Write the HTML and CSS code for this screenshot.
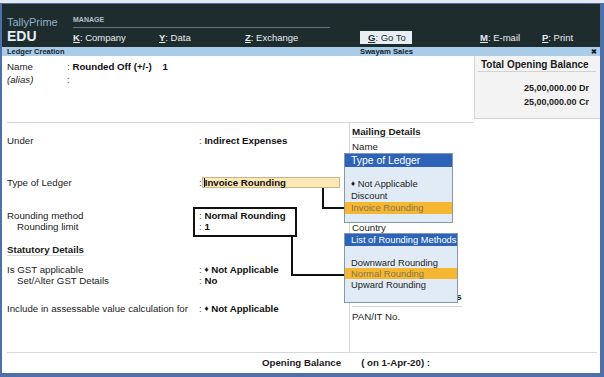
FILE: index.html
```html
<!DOCTYPE html>
<html lang="en">
<head>
<meta charset="utf-8">
<title>Ledger Creation</title>
<link rel="stylesheet" href="styles.css">
</head>
<body>
<div class="screen">
  <div class="window">
    <header class="hdr">
      <div class="brand">
        <div class="brand-name">TallyPrime</div>
        <div class="brand-ed">EDU</div>
      </div>
      <div class="nav">
        <div class="manage">MANAGE</div>
        <div class="menu-row">
          <span class="mi mi-company"><u>K</u>: Company</span>
          <span class="mi mi-data"><u>Y</u>: Data</span>
          <span class="mi mi-exchange"><u>Z</u>: Exchange</span>
          <span class="mi mi-goto"><span class="goto-btn"><u>G</u>: Go To</span></span>
          <span class="mi mi-email"><u>M</u>: E-mail</span>
          <span class="mi mi-print"><u>P</u>: Print</span>
        </div>
      </div>
    </header>
    <div class="titlebar">
      <span class="tb-title">Ledger Creation</span>
      <span class="tb-company">Swayam Sales</span>
      <span class="tb-close">&#x2716;</span>
    </div>
    <main class="form">
      <section class="ident">
        <div class="row">
          <span class="lbl">Name</span><span class="colon">:&nbsp;</span><span class="val val-name">Rounded Off (+/-)</span><span class="val">1</span>
        </div>
        <div class="row">
          <span class="lbl alias">(alias)</span><span class="colon">:</span>
        </div>
      </section>
      <aside class="total">
        <div class="total-h">Total Opening Balance</div>
        <div class="amounts">
          <div>25,00,000.00 Dr</div>
          <div>25,00,000.00 Cr</div>
        </div>
      </aside>
      <section class="main">
        <div class="field f-under"><span class="lbl">Under</span><span class="colon">:&nbsp;</span><span class="val">Indirect Expenses</span></div>
        <div class="field f-type"><span class="lbl">Type of Ledger</span><span class="colon">:</span><span class="inp"><span class="caret"></span><span class="val">Invoice Rounding</span></span></div>
        <div class="field f-round"><span class="lbl">Rounding method</span><span class="colon">:&nbsp;</span><span class="val">Normal Rounding</span></div>
        <div class="field sub"><span class="lbl">Rounding limit</span><span class="colon">:&nbsp;</span><span class="val">1</span></div>
        <div class="stat">Statutory Details</div>
        <div class="field f-gst"><span class="lbl">Is GST applicable</span><span class="colon">:&nbsp;</span><span class="val"><span class="dia">&#x2666;</span> Not Applicable</span></div>
        <div class="field sub"><span class="lbl">Set/Alter GST Details</span><span class="colon">:&nbsp;</span><span class="val">No</span></div>
        <div class="field f-incl"><span class="lbl">Include in assessable value calculation for</span><span class="colon">:&nbsp;</span><span class="val"><span class="dia">&#x2666;</span> Not Applicable</span></div>
      </section>
      <section class="mailing">
        <div class="mh">Mailing Details</div>
        <div class="ml m-name">Name</div>
        <div class="ml m-country">Country</div>
        <div class="mh m-tax">Tax Registration Details</div>
        <div class="ml m-pan">PAN/IT No.</div>
      </section>
      <footer class="opening">
        <span>Opening Balance</span><span class="ob-date">( on 1-Apr-20) :</span>
      </footer>
    </main>
  </div>

  <div class="callout"></div>
  <svg class="connectors" width="604" height="377" viewBox="0 0 604 377">
    <path d="M323 188 V208 H345" fill="none" stroke="#111" stroke-width="2"/>
    <path d="M292 237 V275 H345" fill="none" stroke="#111" stroke-width="2"/>
  </svg>

  <div class="popup pl-type">
    <div class="pop-h">Type of Ledger</div>
    <div class="pop-list">
      <div class="pop-i"><span class="dia">&#x2666;</span> Not Applicable</div>
      <div class="pop-i">Discount</div>
      <div class="pop-i sel">Invoice Rounding</div>
    </div>
  </div>

  <div class="popup pl-round">
    <div class="pop-h">List of Rounding Methods</div>
    <div class="pop-list">
      <div class="pop-i">Downward Rounding</div>
      <div class="pop-i sel">Normal Rounding</div>
      <div class="pop-i">Upward Rounding</div>
    </div>
  </div>
</div>
</body>
</html>
```

FILE: styles.css
```css
* { box-sizing: border-box; }

body {
  margin: 0;
  font-family: "Liberation Sans", Arial, sans-serif;
  color: #1b1b1b;
  background: #ffffff;
}

.screen {
  position: relative;
  width: 604px;
  height: 377px;
  padding-top: 3px;
  background: #e6eaf0;
  overflow: hidden;
}

.window {
  height: 374px;
  display: flex;
  flex-direction: column;
  border-style: solid;
  border-color: #4e70aa;
  border-width: 1px 4px 4px 2px;
  background: #ffffff;
}

/* header */
.hdr {
  height: 43px;
  flex: none;
  display: flex;
  padding-left: 5px;
  background: #1f2c2e;
}
.brand { width: 66px; }
.brand-name {
  padding-top: 12px;
  line-height: 12px;
  font-size: 11px;
  color: #8db2c8;
}
.brand-ed {
  line-height: 16px;
  font-size: 14px;
  font-weight: bold;
  color: #e4eef4;
}
.nav { flex: 1; }
.manage {
  width: 257px;
  padding-top: 12px;
  padding-bottom: 3px;
  line-height: 8px;
  font-size: 7px;
  font-weight: bold;
  color: #b4c2cf;
  border-bottom: 1px solid #66747a;
}
.menu-row {
  display: flex;
  margin-top: 3px;
  font-size: 9.5px;
  line-height: 13px;
  color: #e6edf2;
  white-space: nowrap;
}
.mi u { font-weight: bold; }
.mi-company { width: 86px; }
.mi-data { width: 86px; }
.mi-exchange { width: 115px; }
.mi-goto { width: 120px; }
.mi-email { width: 62px; }
.goto-btn {
  display: inline-block;
  width: 52px;
  padding-left: 8px;
  background: #e9eef5;
  color: #1f2c2e;
}

/* title bar */
.titlebar {
  height: 9px;
  flex: none;
  display: flex;
  align-items: center;
  padding: 0 3px 0 5px;
  background: #a9cce9;
  font-weight: bold;
  color: #17202a;
  line-height: 9px;
  white-space: nowrap;
}
.tb-title { width: 353px; font-size: 7.5px; }
.tb-company { font-size: 7.7px; }
.tb-close { margin-left: auto; font-size: 7px; }

/* form */
.form {
  flex: 1;
  display: grid;
  grid-template-columns: 347px 125px 1fr;
  grid-template-rows: 67px 229px 1fr;
  font-size: 9.7px;
}

.colon { color: #555; }
.val { font-weight: bold; color: #111; }
.dia { font-size: 8px; vertical-align: 1px; }

.ident {
  grid-column: 1 / 3;
  grid-row: 1;
  margin-left: 5px;
  padding-top: 4px;
  border-bottom: 1px solid #d3d8de;
}
.row {
  display: flex;
  line-height: 13px;
  white-space: nowrap;
}
.ident .lbl { width: 60px; }
.alias { font-style: italic; }
.val-name { width: 90px; }

.total {
  grid-column: 3;
  grid-row: 1;
  height: 63px;
  padding-top: 3px;
  background: #f3f3f3;
  border-left: 1px solid #d6d6d6;
  border-bottom: 1px solid #d6d6d6;
}
.total-h {
  margin: 0 4px 0 3px;
  padding-left: 3px;
  line-height: 12px;
  font-size: 10px;
  font-weight: bold;
  border-bottom: 1px solid #d2d2d2;
  white-space: nowrap;
}
.amounts {
  margin-top: 9px;
  padding-right: 11px;
  text-align: right;
  font-size: 9px;
  font-weight: bold;
  line-height: 14px;
}

.main {
  grid-column: 1;
  grid-row: 2;
  padding-left: 5px;
}
.field {
  display: flex;
  height: 11px;
  line-height: 11px;
  white-space: nowrap;
}
.field .lbl { width: 192px; flex: none; }
.sub .lbl { padding-left: 10px; }
.f-under { margin-top: 12px; }
.f-type { margin-top: 31px; }
.f-round { margin-top: 22px; }
.f-gst { margin-top: 8px; }
.f-incl { margin-top: 17px; }
.stat {
  display: block;
  width: max-content;
  margin-top: 12px;
  line-height: 11px;
  font-weight: bold;
  border-bottom: 1px solid #d3d8de;
}
.inp {
  display: flex;
  align-items: center;
  width: 138px;
  height: 11px;
  padding-left: 1px;
  background: #fbe7b7;
  border: 1px solid #cdb67f;
  line-height: 9px;
}
.caret {
  width: 1px;
  height: 9px;
  background: #000;
}

.mailing {
  grid-column: 2 / 4;
  grid-row: 2;
  padding-left: 2px;
  border-left: 1px solid #d3d8de;
}
.mh {
  display: block;
  width: max-content;
  margin-top: 3px;
  line-height: 11px;
  font-weight: bold;
  font-size: 9.8px;
  border-bottom: 1px solid #d3d8de;
}
.ml { line-height: 11px; }
.m-name { margin-top: 3px; }
.m-country { margin-top: 70px; }
.m-tax {
  margin-top: 58px;
  padding-bottom: 4px;
  font-size: 9.7px;
}
.m-pan { margin-top: 4px; }

.opening {
  grid-column: 1 / -1;
  grid-row: 3;
  margin: 0 3px 0 5px;
  padding-top: 4px;
  padding-left: 255px;
  border-top: 1px solid #d3d8de;
  font-weight: bold;
  line-height: 11px;
  white-space: nowrap;
}
.ob-date { margin-left: 20px; }

/* overlays */
.callout {
  position: absolute;
  left: 193px;
  top: 207px;
  width: 104px;
  height: 30px;
  border: 2px solid #111;
}
.connectors {
  position: absolute;
  left: 0;
  top: 0;
  pointer-events: none;
}

.popup {
  position: absolute;
  height: 70px;
  border: 1px solid #8798ae;
  background: #e1ebf6;
  font-size: 9.4px;
  white-space: nowrap;
  overflow: hidden;
}
.pl-type { left: 344px; top: 153px; width: 109px; }
.pl-round { left: 344px; top: 233px; width: 114px; }
.pop-h {
  height: 13px;
  line-height: 13px;
  padding-left: 6px;
  background: #2d64b7;
  color: #ffffff;
  font-size: 10.4px;
}
.pl-round .pop-h {
  height: 12px;
  line-height: 12px;
  font-size: 9.3px;
}
.pop-list { padding-top: 11px; }
.pop-i {
  line-height: 12px;
  padding-left: 6px;
  color: #1d1d1d;
}
.pl-round .pop-i { line-height: 11px; }
.pop-i.sel {
  background: #f5b631;
  color: #857653;
}
```
